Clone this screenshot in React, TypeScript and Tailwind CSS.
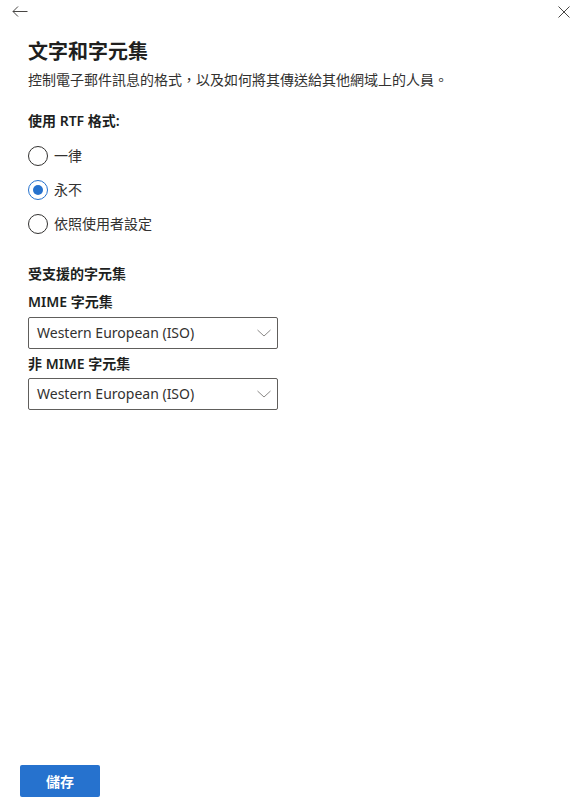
import React, { useState } from 'react'

const font = { fontFamily: '"Noto Sans", "Noto Sans CJK TC", sans-serif' }

const options = ['一律', '永不', '依照使用者設定']

function Radio({ label, checked, onPick }: { label: string; checked: boolean; onPick: () => void }) {
    return (
        <button type="button" onClick={onPick} className="flex h-[20px] items-center gap-[6px] text-left">
            <span
                className={
                    checked
                        ? 'flex h-[20px] w-[20px] items-center justify-center rounded-full border border-[#2672ce]'
                        : 'flex h-[20px] w-[20px] items-center justify-center rounded-full border border-[#323130]'
                }
            >
                {checked && <span className="h-[10px] w-[10px] rounded-full bg-[#2672ce]" />}
            </span>
            <span className="text-[14px] leading-[20px] text-[#323130]">{label}</span>
        </button>
    )
}

function Select({ value }: { value: string }) {
    return (
        <div className="flex h-[32px] w-[250px] items-center justify-between rounded-[2px] border border-[#605e5c] pl-[8px] pr-[6px]">
            <span className="text-[14px] leading-[20px] text-[#323130]">{value}</span>
            <svg width="14" height="8" viewBox="0 0 14 8" fill="none">
                <path d="M0.5 1 L7 7 L13.5 1" stroke="#8a8886" strokeWidth="1" />
            </svg>
        </div>
    )
}

export default function App() {
    const [picked, setPicked] = useState(1)

    return (
        <div style={font} className="flex h-[810px] w-[576px] flex-col bg-white text-[#201f1e]">
            <div className="flex items-start justify-between pl-[12px] pr-[6px] pt-[6px]">
                <svg width="16" height="11" viewBox="0 0 16 11" fill="none">
                    <path d="M15.5 5.5 H1 M6 0.5 L1 5.5 L6 10.5" stroke="#484644" strokeWidth="1" />
                </svg>
                <svg width="12" height="12" viewBox="0 0 12 12" fill="none">
                    <path d="M0.5 0.5 L11.5 11.5 M11.5 0.5 L0.5 11.5" stroke="#484644" strokeWidth="1" />
                </svg>
            </div>

            <div className="flex flex-1 flex-col px-[28px] pt-[20px]">
                <h1 className="text-[20px] font-semibold leading-[28px]">文字和字元集</h1>
                <p className="mt-[4px] text-[14px] leading-[20px] text-[#323130]">
                    控制電子郵件訊息的格式，以及如何將其傳送給其他網域上的人員。
                </p>

                <p className="mt-[21px] text-[14px] font-semibold leading-[20px]">使用 RTF 格式:</p>
                <div className="mt-[15px] flex flex-col gap-[14px]">
                    {options.map((o, i) => (
                        <Radio key={o} label={o} checked={picked === i} onPick={() => setPicked(i)} />
                    ))}
                </div>

                <p className="mt-[30px] text-[14px] font-semibold leading-[20px]">受支援的字元集</p>
                <p className="mt-[8px] text-[14px] font-semibold leading-[20px]">MIME 字元集</p>
                <div className="mt-[5px]">
                    <Select value="Western European (ISO)" />
                </div>
                <p className="mt-[5px] text-[14px] font-semibold leading-[20px]">非 MIME 字元集</p>
                <div className="mt-[4px]">
                    <Select value="Western European (ISO)" />
                </div>
            </div>

            <div className="px-[20px] pb-[13px]">
                <button
                    type="button"
                    className="h-[32px] w-[80px] rounded-[2px] bg-[#2672ce] text-[14px] font-semibold text-white"
                >
                    儲存
                </button>
            </div>
        </div>
    )
}
